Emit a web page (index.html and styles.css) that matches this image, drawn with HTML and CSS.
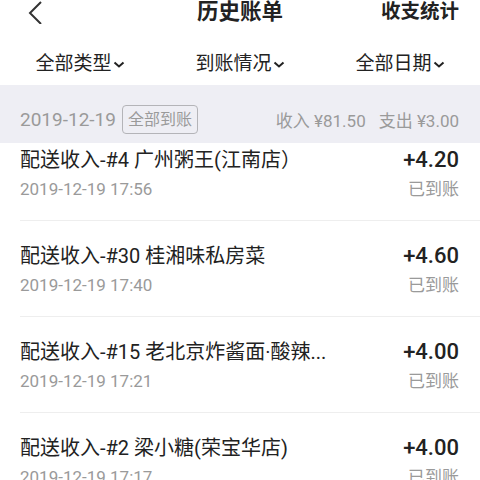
FILE: index.html
```html
<!DOCTYPE html>
<html lang="zh-CN">
<head>
  <meta charset="UTF-8" />
  <meta name="viewport" content="width=device-width, initial-scale=1.0"/>
  <title>历史账单</title>
  <link rel="stylesheet" href="styles.css">
</head>
<body>
  <header class="topbar">
    <a class="back" href="#" aria-label="返回">
      <svg width="16" height="24" viewBox="0 0 16 24">
        <polyline points="13,2 2,13 13,24" fill="none" stroke="#333" stroke-width="2"/>
      </svg>
    </a>
    <h1 class="title">历史账单</h1>
    <a class="stats" href="#">收支统计</a>
  </header>

  <nav class="filters">
    <div class="filter">全部类型<svg class="caret" width="12" height="8" viewBox="0 0 12 8"><polyline points="1.5,1.5 6,5.5 10.5,1.5" fill="none" stroke="#222" stroke-width="2"/></svg></div>
    <div class="filter">到账情况<svg class="caret" width="12" height="8" viewBox="0 0 12 8"><polyline points="1.5,1.5 6,5.5 10.5,1.5" fill="none" stroke="#222" stroke-width="2"/></svg></div>
    <div class="filter">全部日期<svg class="caret" width="12" height="8" viewBox="0 0 12 8"><polyline points="1.5,1.5 6,5.5 10.5,1.5" fill="none" stroke="#222" stroke-width="2"/></svg></div>
  </nav>

  <section class="day-summary">
    <div class="day-left">
      <span class="day-date">2019-12-19</span>
      <span class="badge">全部到账</span>
    </div>
    <div class="day-total">收入 ¥81.50<span class="sep"></span>支出 ¥3.00</div>
  </section>

  <!-- list is scrolled a little under the summary band -->
  <div class="list-view">
    <ul class="list">
      <li class="row">
        <div class="row-main">
          <div class="row-title">配送收入-#4 广州粥王(江南店）</div>
          <div class="row-time">2019-12-19 17:56</div>
        </div>
        <div class="row-side">
          <div class="amount">+4.20</div>
          <div class="status">已到账</div>
        </div>
      </li>
      <li class="row">
        <div class="row-main">
          <div class="row-title">配送收入-#30 桂湘味私房菜</div>
          <div class="row-time">2019-12-19 17:40</div>
        </div>
        <div class="row-side">
          <div class="amount">+4.60</div>
          <div class="status">已到账</div>
        </div>
      </li>
      <li class="row">
        <div class="row-main">
          <div class="row-title">配送收入-#15 老北京炸酱面·酸辣...</div>
          <div class="row-time">2019-12-19 17:21</div>
        </div>
        <div class="row-side">
          <div class="amount">+4.00</div>
          <div class="status">已到账</div>
        </div>
      </li>
      <li class="row">
        <div class="row-main">
          <div class="row-title">配送收入-#2 梁小糖(荣宝华店)</div>
          <div class="row-time">2019-12-19 17:17</div>
        </div>
        <div class="row-side">
          <div class="amount">+4.00</div>
          <div class="status">已到账</div>
        </div>
      </li>
    </ul>
  </div>
</body>
</html>
```

FILE: styles.css
```css
:root {
  --text-color: #222;
  --muted-color: #9a9a9a;
  --band-color: #eeeef4;
  --line-color: #eeeeee;
}

body {
  margin: 0;
  padding: 0;
  background: #fff;
  color: var(--text-color);
  font-family: Roboto, "Noto Sans CJK SC", sans-serif;
  overflow: hidden;
}

a {
  color: inherit;
  text-decoration: none;
}

/* top bar */
.topbar {
  height: 24px;
  display: grid;
  grid-template-columns: 169px auto 1fr;
  align-items: center;
  padding: 0 21px 0 28px;
}

.back {
  display: flex;
  align-items: center;
  height: 24px;
}

.title {
  margin: 0;
  font-size: 21.5px;
  font-weight: 700;
  line-height: 24px;
}

.stats {
  justify-self: end;
  font-size: 19.5px;
  font-weight: 700;
  line-height: 24px;
}

/* filters */
.filters {
  display: grid;
  grid-template-columns: repeat(3, 1fr);
  padding: 28px 0 9px;
}

.filter {
  display: flex;
  justify-content: center;
  align-items: center;
  font-size: 19px;
  line-height: 24px;
}

.caret {
  margin-left: 1px;
  margin-top: 1px;
}

/* summary band */
.day-summary {
  background: var(--band-color);
  height: 48px;
  padding: 10px 21px 0 20px;
  display: flex;
  justify-content: space-between;
  align-items: center;
}

.day-left {
  display: flex;
  align-items: center;
}

.day-date {
  font-size: 19px;
  color: var(--muted-color);
}

.badge {
  margin-left: 6px;
  padding: 0 5px;
  border: 1px solid #b4b4b8;
  border-radius: 4px;
  font-size: 16px;
  line-height: 27px;
  color: var(--muted-color);
}

.day-total {
  font-size: 17px;
  color: var(--muted-color);
}

.sep {
  display: inline-block;
  width: 13px;
}

/* list */
.list-view {
  overflow: hidden;
}

.list {
  list-style: none;
  margin: -18px 0 0;
  padding: 0;
}

.row {
  margin-left: 20px;
  padding: 22px 21px 19px 0;
  border-bottom: 1px solid var(--line-color);
  display: flex;
  justify-content: space-between;
}

.row-title {
  font-size: 20px;
  line-height: 26px;
}

.row-time {
  margin-top: 4px;
  font-size: 17px;
  line-height: 24px;
  color: var(--muted-color);
}

.row-side {
  text-align: right;
}

.amount {
  font-size: 22px;
  font-weight: 500;
  line-height: 26px;
}

.status {
  margin-top: 4px;
  font-size: 17px;
  line-height: 24px;
  color: var(--muted-color);
}
```
